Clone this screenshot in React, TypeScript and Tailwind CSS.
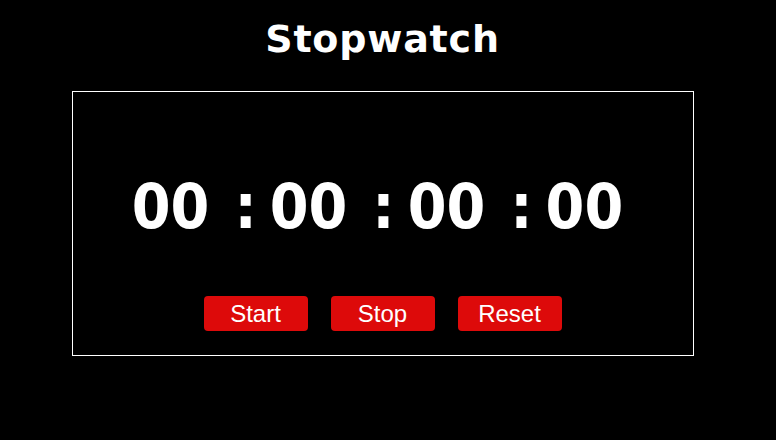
import React from 'react'

const digitFont = { fontFamily: '"DejaVu Sans Condensed", "DejaVu Sans", sans-serif' }

function Sep() {
  return <span className="ml-[25px] mr-[13px]">:</span>
}

export default function App() {
  const parts = ['00', '00', '00', '00']
  return (
    <div className="min-h-screen w-full bg-black text-white">
      <div className="w-[765px] flex flex-col items-center">
        <h1
          className="mt-[20px] text-[38px] font-bold leading-none tracking-[0.8px]"
          style={{ fontFamily: '"DejaVu Sans", sans-serif' }}
        >
          Stopwatch
        </h1>
        <div className="mt-[33px] w-[622px] h-[265px] border border-white flex flex-col items-center">
          <div
            className="mt-[84px] pr-[10px] flex text-[62px] font-bold leading-none"
            style={digitFont}
          >
            {parts.map((p, i) => (
              <React.Fragment key={i}>
                {i > 0 && <Sep />}
                <span>{p}</span>
              </React.Fragment>
            ))}
          </div>
          <div className="mt-[58px] flex gap-[23px]">
            {['Start', 'Stop', 'Reset'].map((b) => (
              <button
                key={b}
                className="w-[104px] h-[35px] rounded-[4px] bg-[#dd0a0a] text-white text-[24px] leading-none"
                style={{ fontFamily: '"Liberation Sans", Arial, sans-serif' }}
              >
                {b}
              </button>
            ))}
          </div>
        </div>
      </div>
    </div>
  )
}
